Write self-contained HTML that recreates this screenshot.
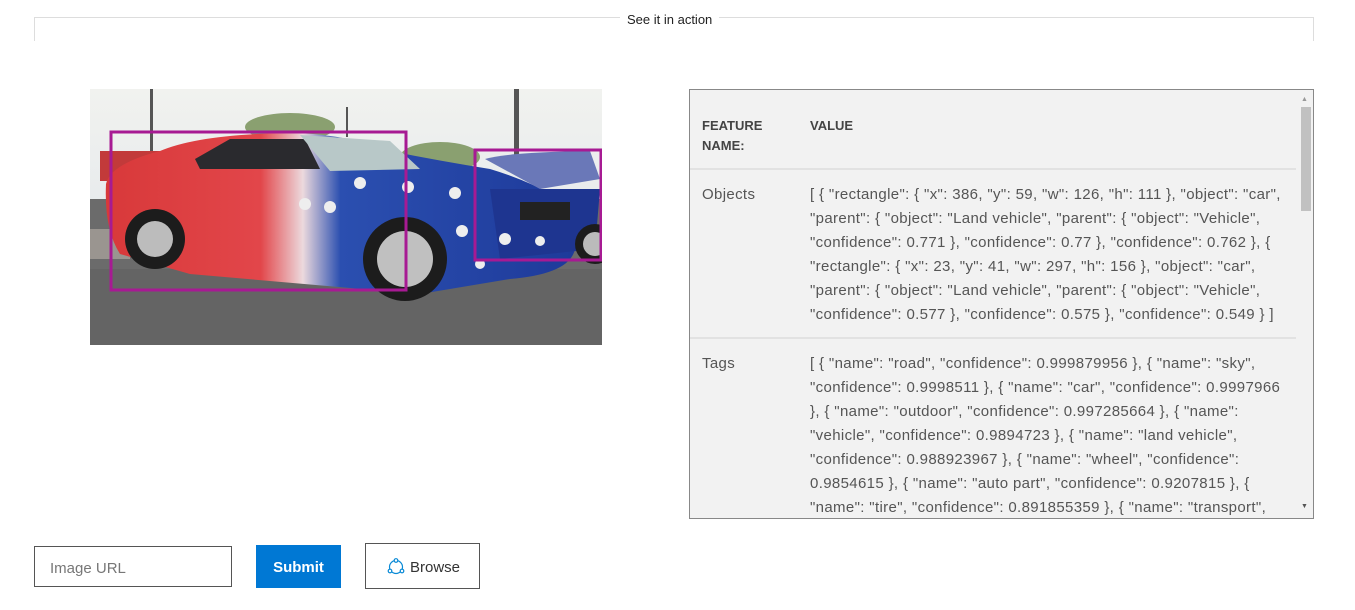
<!DOCTYPE html>
<html><head><meta charset="utf-8"><style>
*{margin:0;padding:0;box-sizing:border-box}
body{width:1355px;height:610px;background:#fff;font-family:"Liberation Sans",sans-serif;color:#444;position:relative;overflow:hidden}
.abs{position:absolute}
.fs{left:34px;top:17px;width:1280px;height:24px;border:1px solid #ddd;border-bottom:none}
.leg{left:620px;top:12px;background:#fff;padding:0 7px;font-size:13px;color:#222}
.tbl{left:689px;top:89px;width:625px;height:430px;border:1px solid #888;background:#f2f2f2;overflow:hidden}
.sb{right:0;top:0;width:16px;height:428px;background:#f2f2f2}
.thumb{left:4px;top:17px;width:10px;height:104px;background:#c1c1c1}
.h{font-weight:bold;font-size:13px;color:#444;line-height:20px}
.t{font-size:15px;line-height:24px;color:#555;white-space:nowrap;letter-spacing:0.35px}
.sep{left:0;width:606px;height:2px;background:#e2e2e2}
</style></head><body>
<div class="abs fs"></div>
<div class="abs leg">See it in action</div>

<svg class="abs" style="left:90px;top:89px" width="512" height="256" viewBox="0 0 512 256">
<defs>
<linearGradient id="sky" x1="0" y1="0" x2="0" y2="1"><stop offset="0" stop-color="#f1f2ef"/><stop offset="1" stop-color="#dde3ea"/></linearGradient>
<linearGradient id="body" x1="0" y1="0" x2="1" y2="0"><stop offset="0" stop-color="#d8393a"/><stop offset="0.33" stop-color="#e2464a"/><stop offset="0.42" stop-color="#ecd9dd"/><stop offset="0.5" stop-color="#2b4fb0"/><stop offset="1" stop-color="#1e3a9a"/></linearGradient>
</defs>
<rect width="512" height="256" fill="url(#sky)"/>
<rect y="110" width="512" height="146" fill="#6b6b6b"/>
<rect y="180" width="512" height="76" fill="#646464"/>
<rect x="0" y="140" width="40" height="30" fill="#9a9590"/>
<rect x="60" y="0" width="3" height="70" fill="#555"/>
<rect x="424" y="0" width="5" height="70" fill="#555"/>
<rect x="256" y="18" width="2" height="30" fill="#555"/>
<ellipse cx="200" cy="38" rx="45" ry="14" fill="#8aa070"/>
<ellipse cx="350" cy="68" rx="40" ry="15" fill="#8aa070"/>
<rect x="10" y="62" width="60" height="30" fill="#c23a3a"/>
<path d="M16 95 Q20 75 70 62 Q110 45 200 44 Q250 44 300 62 Q350 72 400 80 Q440 92 470 110 L485 160 Q480 185 420 190 L330 205 L100 185 L30 165 Q14 140 16 95Z" fill="url(#body)"/>
<path d="M105 70 L140 50 L215 50 L230 80 L110 80Z" fill="#2a2a2e"/>
<path d="M210 46 L300 52 L330 80 L240 82Z" fill="#b8c8c8"/>
<path d="M395 70 Q420 63 500 62 L510 90 L450 100Z" fill="#6a78b8"/>
<path d="M400 100 L510 100 L505 160 L410 170Z" fill="#1e3590"/>
<rect x="430" y="113" width="50" height="18" fill="#222"/>
<circle cx="65" cy="150" r="30" fill="#1c1c1c"/><circle cx="65" cy="150" r="18" fill="#bcbcbc"/>
<circle cx="315" cy="170" r="42" fill="#1c1c1c"/><circle cx="315" cy="170" r="28" fill="#c0c0c0"/>
<circle cx="505" cy="155" r="20" fill="#1c1c1c"/><circle cx="505" cy="155" r="12" fill="#bbb"/>
<g fill="#eee"><circle cx="215" cy="115" r="6"/><circle cx="240" cy="118" r="6"/><circle cx="270" cy="94" r="6"/><circle cx="318" cy="98" r="6"/><circle cx="365" cy="104" r="6"/><circle cx="372" cy="142" r="6"/><circle cx="415" cy="150" r="6"/><circle cx="450" cy="152" r="5"/><circle cx="390" cy="175" r="5"/></g>
<rect x="21" y="43" width="295" height="158" fill="none" stroke="#a71a93" stroke-width="3"/>
<rect x="385" y="61" width="126" height="110" fill="none" stroke="#a71a93" stroke-width="3"/>
</svg>

<div class="abs tbl">
 <div class="abs sb"><div class="abs" style="left:4px;top:6px;font-size:7px;color:#999">▲</div><div class="abs thumb"></div><div class="abs" style="left:4px;top:413px;font-size:7px;color:#555">▼</div></div>
 <div class="abs h" style="left:12px;top:26px">FEATURE<br>NAME:</div>
 <div class="abs h" style="left:120px;top:26px">VALUE</div>
 <div class="abs sep" style="top:78px"></div>
 <div class="abs t" style="left:12px;top:93px">Objects</div>
 <div class="abs t" style="left:120px;top:93px">[ { "rectangle": { "x": 386, "y": 59, "w": 126, "h": 111 }, "object": "car",<br>"parent": { "object": "Land vehicle", "parent": { "object": "Vehicle",<br>"confidence": 0.771 }, "confidence": 0.77 }, "confidence": 0.762 }, {<br>"rectangle": { "x": 23, "y": 41, "w": 297, "h": 156 }, "object": "car",<br>"parent": { "object": "Land vehicle", "parent": { "object": "Vehicle",<br>"confidence": 0.577 }, "confidence": 0.575 }, "confidence": 0.549 } ]</div>
 <div class="abs sep" style="top:247px"></div>
 <div class="abs t" style="left:12px;top:262px">Tags</div>
 <div class="abs t" style="left:120px;top:262px">[ { "name": "road", "confidence": 0.999879956 }, { "name": "sky",<br>"confidence": 0.9998511 }, { "name": "car", "confidence": 0.9997966<br>}, { "name": "outdoor", "confidence": 0.997285664 }, { "name":<br>"vehicle", "confidence": 0.9894723 }, { "name": "land vehicle",<br>"confidence": 0.988923967 }, { "name": "wheel", "confidence":<br>0.9854615 }, { "name": "auto part", "confidence": 0.9207815 }, {<br>"name": "tire", "confidence": 0.891855359 }, { "name": "transport",</div>
</div>

<div class="abs" style="left:34px;top:546px;width:198px;height:41px;border:1px solid #555;font-size:15px;color:#777;padding:13px 15px 0">Image URL</div>
<div class="abs" style="left:256px;top:545px;width:85px;height:43px;background:#0078d4;color:#fff;font-weight:bold;font-size:15px;text-align:center;line-height:45px">Submit</div>
<div class="abs" style="left:365px;top:543px;width:115px;height:46px;border:1px solid #555;font-size:15px;color:#333;line-height:47px;padding-left:44px">Browse</div>
<svg class="abs" style="left:386px;top:557px" width="20" height="20" viewBox="0 0 20 20" fill="none" stroke="#0a8ad6" stroke-width="1.2"><circle cx="10" cy="10" r="6.5"/><circle cx="10" cy="3.5" r="1.8" fill="#fff"/><circle cx="4" cy="14" r="1.8" fill="#fff"/><circle cx="16" cy="14" r="1.8" fill="#fff"/></svg>
</body></html>
